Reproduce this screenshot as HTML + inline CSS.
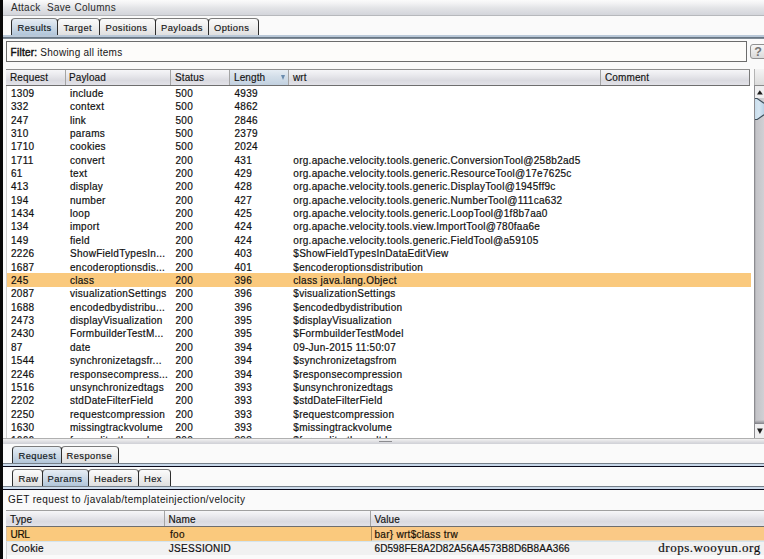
<!DOCTYPE html>
<html><head><meta charset="utf-8">
<style>
*{margin:0;padding:0;box-sizing:border-box}
html,body{width:764px;height:559px;overflow:hidden;background:#fafafa}
body{position:relative;font-family:"Liberation Sans",sans-serif;font-size:10.0px;letter-spacing:0.28px;color:#111}
.a{position:absolute}
span{white-space:nowrap}
#lb{left:0;top:0;width:2.7px;height:559px;background:#080808}
#menu{left:3px;top:0;width:761px;height:15.5px;background:linear-gradient(#fbfbfb,#f1f1f3 25%,#e2e3e6 55%,#d3d5db);border-bottom:1px solid #b6b8bc}
#menu span{position:absolute;top:2px;color:#2a2a2a}
.tab{position:absolute;border:1px solid #2e2e2e;border-top-color:#7c7c7c;border-bottom:none;border-radius:4px 4px 0 0;background:linear-gradient(#fbfbfb,#ececec 55%,#dedede);}
.tab span{position:absolute;top:2.9px;color:#161616;-webkit-text-stroke:0.15px #161616;font-size:9.4px;letter-spacing:0.42px}
.tab.on{background:linear-gradient(#e6edf4,#c9d7e5 55%,#aec3d8);}
.tab.on span{color:#0e1822}
.tl1{position:absolute;left:3px;width:761px;height:2px;background:#b9c8d8}
.tl2{position:absolute;left:3px;width:761px;height:1px;background:#4c5a68}
#filter{left:6px;top:41px;width:741px;height:21px;border:1px solid #6c6c6c;background:#fdfcfa}
#filter>span{position:absolute;left:3.6px;top:4.6px;color:#151515;letter-spacing:0.25px}
#help{left:750px;top:44px;width:20px;height:15px;border:1px solid #909090;border-radius:3px;background:linear-gradient(#f7f7f7,#dadada);}
#help span{position:absolute;left:3.3px;top:-0.5px;font-size:12.5px;font-weight:bold;color:#757575;letter-spacing:0}
.hdr{position:absolute;border-top:1px solid #8e8e8e;border-bottom:1px solid #6e6e6e;background:linear-gradient(#f6f6f8,#ebebef 30%,#dadae0 70%,#e2e2e8)}
.hc{position:absolute;top:0;height:15px;border-right:1px solid #a4a4a4}
.hc span{position:absolute;top:2.3px;color:#141414;-webkit-text-stroke:0.15px #141414;letter-spacing:0.12px}
#tbl{left:6px;top:86px;width:748px;height:351.5px;background:#fff;overflow:hidden;border-left:1px solid #d0d0d0}
.row{position:absolute;left:0;width:744px;height:13.37px}
.row.sel{background:#fac97d}
.c{position:absolute;top:1.8px;color:#111;-webkit-text-stroke:0.2px #111}
#sbx{left:754px;top:69px;width:10px;height:17px;background:linear-gradient(#f4f4f4,#dcdcdc);border-bottom:1px solid #8a8a8a;border-left:1px solid #b4b4b4}
#sb{left:754px;top:86px;width:15px;height:352px;background:linear-gradient(90deg,#a8a8a8,#c4c4c4 25%,#d8d8d8 70%,#dedede);border-left:1px solid #8c8c8c}
#sbtop{left:755px;top:86px;width:10px;height:12px;background:#eeeeee}
#sbbot{left:755px;top:424px;width:10px;height:14px;background:#eeeeee;border-top:1px solid #9a9a9a}
#thumb{left:754px;top:98px;width:20px;height:22px;border:1px solid #4c5c68;border-radius:10px/11px;background:linear-gradient(90deg,#b4cee4,#d8e8f4 50%,#c4dcee)}
#split{left:3px;top:437.5px;width:761px;height:6px;background:linear-gradient(#f2f2f2,#dcdce0 60%,#cfd0d6);border-top:1px solid #b0b0b0}
#grip{left:379px;top:440.5px;width:13px;height:1px;background:#8c8c90}
.wm{position:absolute;font-family:"Liberation Serif",serif;font-size:13px;letter-spacing:0.5px;color:#101010;-webkit-text-stroke:0.2px #101010}
.tri{position:absolute;width:0;height:0}
</style></head><body>
<div class="a" id="lb"></div>
<div class="a" id="menu"><span style="left:8px">Attack</span><span style="left:44px">Save</span><span style="left:71.5px">Columns</span></div>

<div class="tab on" style="left:11px;top:18px;width:47px;height:18px"><span style="left:5.5px;">Results</span></div>
<div class="tab" style="left:57px;top:18px;width:43px;height:18px"><span style="left:5.5px;">Target</span></div>
<div class="tab" style="left:99px;top:18px;width:57px;height:18px"><span style="left:5.5px;">Positions</span></div>
<div class="tab" style="left:155px;top:18px;width:54px;height:18px"><span style="left:5px;">Payloads</span></div>
<div class="tab" style="left:208px;top:18px;width:51px;height:18px"><span style="left:5px;">Options</span></div>
<div class="a" style="left:3px;top:35px;width:761px;height:4px;background:linear-gradient(#b9c8d8 0 2px,#687684 2px 3px,#7e8a96 3px 4px)"></div>

<div class="a" id="filter"><span><span style="-webkit-text-stroke:0.45px #151515">Filter:</span> Showing all items</span></div>
<div class="a" id="help"><span>?</span></div>

<div class="hdr" style="left:6px;top:69px;width:744px;height:17px">
 <div class="hc" style="left:0;width:59.5px"><span style="left:4px">Request</span></div>
 <div class="hc" style="left:59.5px;width:105px"><span style="left:3.5px">Payload</span></div>
 <div class="hc" style="left:164.5px;width:59.5px"><span style="left:4.5px">Status</span></div>
 <div class="hc" style="left:224px;width:59px;background:linear-gradient(#e6edf4,#d3dee9 45%,#c2d1e0)"><span style="left:4px">Length</span><span class="tri" style="left:50.6px;top:5px;border-left:2.7px solid transparent;border-right:2.7px solid transparent;border-top:5px solid #6a8cae"></span></div>
 <div class="hc" style="left:283px;width:312px"><span style="left:4px">wrt</span></div>
 <div class="hc" style="left:595px;width:149px;border-right:1px solid #7a7a7a"><span style="left:4px">Comment</span></div>
</div>
<div class="a" id="sbx"></div>

<div class="a" id="tbl">
<div class="row" style="top:0.00px"><span class="c" style="left:4.00px">1309</span><span class="c" style="left:63.00px">include</span><span class="c" style="left:168.50px">500</span><span class="c" style="left:227.50px">4939</span><span class="c" style="left:286.30px"></span></div>
<div class="row" style="top:13.37px"><span class="c" style="left:4.00px">332</span><span class="c" style="left:63.00px">context</span><span class="c" style="left:168.50px">500</span><span class="c" style="left:227.50px">4862</span><span class="c" style="left:286.30px"></span></div>
<div class="row" style="top:26.74px"><span class="c" style="left:4.00px">247</span><span class="c" style="left:63.00px">link</span><span class="c" style="left:168.50px">500</span><span class="c" style="left:227.50px">2846</span><span class="c" style="left:286.30px"></span></div>
<div class="row" style="top:40.11px"><span class="c" style="left:4.00px">310</span><span class="c" style="left:63.00px">params</span><span class="c" style="left:168.50px">500</span><span class="c" style="left:227.50px">2379</span><span class="c" style="left:286.30px"></span></div>
<div class="row" style="top:53.48px"><span class="c" style="left:4.00px">1710</span><span class="c" style="left:63.00px">cookies</span><span class="c" style="left:168.50px">500</span><span class="c" style="left:227.50px">2024</span><span class="c" style="left:286.30px"></span></div>
<div class="row" style="top:66.85px"><span class="c" style="left:4.00px">1711</span><span class="c" style="left:63.00px">convert</span><span class="c" style="left:168.50px">200</span><span class="c" style="left:227.50px">431</span><span class="c" style="left:286.30px">org.apache.velocity.tools.generic.ConversionTool@258b2ad5</span></div>
<div class="row" style="top:80.22px"><span class="c" style="left:4.00px">61</span><span class="c" style="left:63.00px">text</span><span class="c" style="left:168.50px">200</span><span class="c" style="left:227.50px">429</span><span class="c" style="left:286.30px">org.apache.velocity.tools.generic.ResourceTool@17e7625c</span></div>
<div class="row" style="top:93.59px"><span class="c" style="left:4.00px">413</span><span class="c" style="left:63.00px">display</span><span class="c" style="left:168.50px">200</span><span class="c" style="left:227.50px">428</span><span class="c" style="left:286.30px">org.apache.velocity.tools.generic.DisplayTool@1945ff9c</span></div>
<div class="row" style="top:106.96px"><span class="c" style="left:4.00px">194</span><span class="c" style="left:63.00px">number</span><span class="c" style="left:168.50px">200</span><span class="c" style="left:227.50px">427</span><span class="c" style="left:286.30px">org.apache.velocity.tools.generic.NumberTool@111ca632</span></div>
<div class="row" style="top:120.33px"><span class="c" style="left:4.00px">1434</span><span class="c" style="left:63.00px">loop</span><span class="c" style="left:168.50px">200</span><span class="c" style="left:227.50px">425</span><span class="c" style="left:286.30px">org.apache.velocity.tools.generic.LoopTool@1f8b7aa0</span></div>
<div class="row" style="top:133.70px"><span class="c" style="left:4.00px">134</span><span class="c" style="left:63.00px">import</span><span class="c" style="left:168.50px">200</span><span class="c" style="left:227.50px">424</span><span class="c" style="left:286.30px">org.apache.velocity.tools.view.ImportTool@780faa6e</span></div>
<div class="row" style="top:147.07px"><span class="c" style="left:4.00px">149</span><span class="c" style="left:63.00px">field</span><span class="c" style="left:168.50px">200</span><span class="c" style="left:227.50px">424</span><span class="c" style="left:286.30px">org.apache.velocity.tools.generic.FieldTool@a59105</span></div>
<div class="row" style="top:160.44px"><span class="c" style="left:4.00px">2226</span><span class="c" style="left:63.00px">ShowFieldTypesIn...</span><span class="c" style="left:168.50px">200</span><span class="c" style="left:227.50px">403</span><span class="c" style="left:286.30px">$ShowFieldTypesInDataEditView</span></div>
<div class="row" style="top:173.81px"><span class="c" style="left:4.00px">1687</span><span class="c" style="left:63.00px">encoderoptionsdis...</span><span class="c" style="left:168.50px">200</span><span class="c" style="left:227.50px">401</span><span class="c" style="left:286.30px">$encoderoptionsdistribution</span></div>
<div class="row sel" style="top:187.18px"><span class="c" style="left:4.00px">245</span><span class="c" style="left:63.00px">class</span><span class="c" style="left:168.50px">200</span><span class="c" style="left:227.50px">396</span><span class="c" style="left:286.30px">class java.lang.Object</span></div>
<div class="row" style="top:200.55px"><span class="c" style="left:4.00px">2087</span><span class="c" style="left:63.00px">visualizationSettings</span><span class="c" style="left:168.50px">200</span><span class="c" style="left:227.50px">396</span><span class="c" style="left:286.30px">$visualizationSettings</span></div>
<div class="row" style="top:213.92px"><span class="c" style="left:4.00px">1688</span><span class="c" style="left:63.00px">encodedbydistribu...</span><span class="c" style="left:168.50px">200</span><span class="c" style="left:227.50px">396</span><span class="c" style="left:286.30px">$encodedbydistribution</span></div>
<div class="row" style="top:227.29px"><span class="c" style="left:4.00px">2473</span><span class="c" style="left:63.00px">displayVisualization</span><span class="c" style="left:168.50px">200</span><span class="c" style="left:227.50px">395</span><span class="c" style="left:286.30px">$displayVisualization</span></div>
<div class="row" style="top:240.66px"><span class="c" style="left:4.00px">2430</span><span class="c" style="left:63.00px">FormbuilderTestM...</span><span class="c" style="left:168.50px">200</span><span class="c" style="left:227.50px">395</span><span class="c" style="left:286.30px">$FormbuilderTestModel</span></div>
<div class="row" style="top:254.03px"><span class="c" style="left:4.00px">87</span><span class="c" style="left:63.00px">date</span><span class="c" style="left:168.50px">200</span><span class="c" style="left:227.50px">394</span><span class="c" style="left:286.30px">09-Jun-2015 11:50:07</span></div>
<div class="row" style="top:267.40px"><span class="c" style="left:4.00px">1544</span><span class="c" style="left:63.00px">synchronizetagsfr...</span><span class="c" style="left:168.50px">200</span><span class="c" style="left:227.50px">394</span><span class="c" style="left:286.30px">$synchronizetagsfrom</span></div>
<div class="row" style="top:280.77px"><span class="c" style="left:4.00px">2246</span><span class="c" style="left:63.00px">responsecompress...</span><span class="c" style="left:168.50px">200</span><span class="c" style="left:227.50px">394</span><span class="c" style="left:286.30px">$responsecompression</span></div>
<div class="row" style="top:294.14px"><span class="c" style="left:4.00px">1516</span><span class="c" style="left:63.00px">unsynchronizedtags</span><span class="c" style="left:168.50px">200</span><span class="c" style="left:227.50px">393</span><span class="c" style="left:286.30px">$unsynchronizedtags</span></div>
<div class="row" style="top:307.51px"><span class="c" style="left:4.00px">2202</span><span class="c" style="left:63.00px">stdDateFilterField</span><span class="c" style="left:168.50px">200</span><span class="c" style="left:227.50px">393</span><span class="c" style="left:286.30px">$stdDateFilterField</span></div>
<div class="row" style="top:320.88px"><span class="c" style="left:4.00px">2250</span><span class="c" style="left:63.00px">requestcompression</span><span class="c" style="left:168.50px">200</span><span class="c" style="left:227.50px">393</span><span class="c" style="left:286.30px">$requestcompression</span></div>
<div class="row" style="top:334.25px"><span class="c" style="left:4.00px">1630</span><span class="c" style="left:63.00px">missingtrackvolume</span><span class="c" style="left:168.50px">200</span><span class="c" style="left:227.50px">393</span><span class="c" style="left:286.30px">$missingtrackvolume</span></div>
<div class="row" style="top:347.62px"><span class="c" style="left:4.00px">1666</span><span class="c" style="left:63.00px">formeditorthemel...</span><span class="c" style="left:168.50px">200</span><span class="c" style="left:227.50px">393</span><span class="c" style="left:286.30px">$formeditorthemeltd</span></div>
</div>
<svg class="a" style="left:754px;top:85px" width="10" height="353" viewBox="0 0 10 353">
 <defs><linearGradient id="tg" x1="0" x2="1" y1="0" y2="0"><stop offset="0" stop-color="#9c9ca0"/><stop offset="0.25" stop-color="#c4c4c8"/><stop offset="1" stop-color="#d0d0d4"/></linearGradient>
 <linearGradient id="thg" x1="0" x2="1" y1="0" y2="0"><stop offset="0" stop-color="#c4daea"/><stop offset="0.5" stop-color="#d6e6f2"/><stop offset="1" stop-color="#b8d2e6"/></linearGradient>
 <linearGradient id="bg2" x1="0" x2="0" y1="0" y2="1"><stop offset="0" stop-color="#c8c8cc"/><stop offset="1" stop-color="#505058"/></linearGradient></defs>
 <rect x="0" y="0" width="10" height="353" fill="url(#tg)"/>
 <rect x="0" y="0" width="10" height="13" fill="#efeff0"/>
 <rect x="0" y="0" width="10" height="1" fill="#8a8a8a"/>
 <path d="M5.8 5.2 L3 9.6 L8.8 9.6 Z" fill="#1c1c1c"/>
 <path d="M0 13.3 L3 13.3 L10 18 L10 30 L3 34.7 L0 34.7 Z" fill="url(#thg)"/>
 <path d="M0 13.5 L3.2 13.5 L10 18.2" fill="none" stroke="#3c4c58" stroke-width="1.1"/>
 <path d="M0 34.5 L3.2 34.5 L10 29.8" fill="none" stroke="#3c4c58" stroke-width="1.1"/>
 <rect x="0" y="335" width="10" height="4" fill="url(#bg2)" opacity="0.6"/>
 <rect x="0" y="339" width="10" height="14" fill="#efeff0"/>
 <path d="M3 343.6 L8.8 343.6 L5.9 349 Z" fill="#1c1c1c"/>
 <rect x="0" y="0" width="1" height="353" fill="#8c8c90"/>
</svg>
<div class="a" id="split"></div>
<div class="a" id="grip"></div>

<div class="tab on" style="left:12px;top:446px;width:50px;height:18px"><span style="left:5.5px;">Request</span></div>
<div class="tab" style="left:61px;top:446px;width:58px;height:18px"><span style="left:4.5px;">Response</span></div>
<div class="a" style="left:3px;top:463px;width:761px;height:1px;background:#76808a"></div>
<div class="tl1" style="top:464px;background:#c8d8ea"></div><div class="tl2" style="top:466px;background:#08081a"></div>

<div class="tab" style="left:12px;top:469px;width:31px;height:18px"><span style="left:5.5px;">Raw</span></div>
<div class="tab on" style="left:42px;top:469px;width:47px;height:18px"><span style="left:4.5px;">Params</span></div>
<div class="tab" style="left:88px;top:469px;width:51px;height:18px"><span style="left:5px;">Headers</span></div>
<div class="tab" style="left:138px;top:469px;width:33px;height:18px"><span style="left:5px;">Hex</span></div>
<div class="a" style="left:3px;top:486px;width:761px;height:1px;background:#76808a"></div>
<div class="tl1" style="top:487px;background:#ccdaea"></div><div class="tl2" style="top:489px;background:#08081a"></div>

<span class="a" style="left:8px;top:494.3px;color:#141414;letter-spacing:0.37px">GET request to /javalab/templateinjection/velocity</span>

<div class="hdr" style="left:6px;top:510px;width:758px;height:17px;border-top-color:#a0a0a0">
 <div class="hc" style="left:0;width:158.5px"><span style="left:4px;top:3.2px">Type</span></div>
 <div class="hc" style="left:158.5px;width:206px"><span style="left:4px;top:3.2px">Name</span></div>
 <div class="hc" style="left:364.5px;width:400px;border-right:none"><span style="left:4px;top:3.2px">Value</span></div>
</div>
<div class="a" style="left:6px;top:527px;width:758px;height:13.5px;background:#fac97d;border-left:1px solid #d8c0a0">
 <span class="c" style="left:3.5px;top:2.4px;color:#1e1200;letter-spacing:-0.3px">URL</span><span class="c" style="left:163px;top:2.4px;color:#1e1200">foo</span>
 <div class="a" style="left:363.5px;top:0;width:395px;height:13.5px;border-left:1px solid #a88858;border-bottom:1px solid #e8d8c0;background:#fac986"><span class="c" style="left:3px;top:2.4px;color:#1e1200">bar} wrt$class trw</span></div>
</div>
<div class="a" style="left:6px;top:540.5px;width:758px;height:14px;background:#f1f1f1;border-left:1px solid #d0d0d0;border-top:1px solid #d4e4ee">
 <span class="c" style="left:4px;top:1.9px">Cookie</span><span class="c" style="left:161.8px;top:1.9px">JSESSIONID</span><span class="c" style="left:367.5px;top:1.9px;letter-spacing:0.09px">6D598FE8A2D82A56A4573B8D6B8AA366</span>
</div>
<div class="a" style="left:6px;top:554.5px;width:758px;height:5px;background:#fafafa;border-left:1px solid #d0d0d0"></div>
<div class="wm" style="left:658.3px;top:540.2px">drops.wooyun.org</div>
</body></html>
